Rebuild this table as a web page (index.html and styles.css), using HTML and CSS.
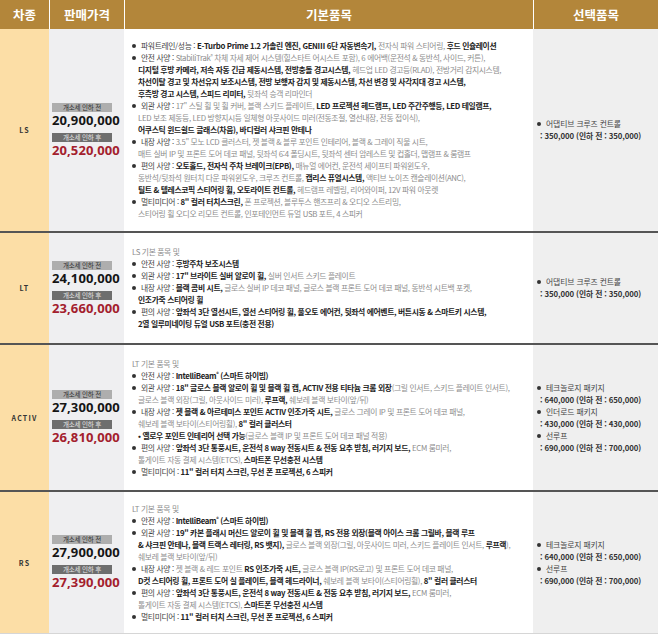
FILE: index.html
```html
<!DOCTYPE html>
<html lang="ko">
<head>
<meta charset="utf-8">
<link rel="stylesheet" href="styles.css">
</head>
<body>
<div class="table">
  <div class="hd">차종</div>
  <div class="hd">판매가격</div>
  <div class="hd">기본품목</div>
  <div class="hd">선택품목</div>

  <!-- LS -->
  <div class="cell trim">LS</div>
  <div class="cell price">
    <div class="pb">
      <div class="tag">개소세 인하 전</div>
      <div class="amt">20,900,000</div>
      <div class="tag dark">개소세 인하 후</div>
      <div class="amt red">20,520,000</div>
    </div>
  </div>
  <div class="cell basic">
    <div class="list">
      <div class="item"><span class="dot"></span><span class="lb">파워트레인/성능 : </span><b>E-Turbo Prime 1.2 가솔린 엔진, GENⅢ 6단 자동변속기,</b> 전자식 파워 스티어링, <b>후드 인슐레이션</b></div>
      <div class="item"><span class="dot"></span><span class="lb">안전 사양 : </span>StabiliTrak<sup class="r">®</sup> 차체 자세 제어 시스템(힐스타트 어시스트 포함), 6 에어백(운전석 &amp; 동반석, 사이드, 커튼),<br><b>디지털 후방 카메라, 저속 자동 긴급 제동시스템, 전방충돌 경고시스템,</b> 헤드업 LED 경고등(RLAD), 전방거리 감지시스템,<br><b>차선이탈 경고 및 차선유지 보조시스템, 전방 보행자 감지 및 제동시스템, 차선 변경 및 사각지대 경고 시스템,</b><br><b>후측방 경고 시스템, 스피드 리미터,</b> 뒷좌석 승객 리마인더</div>
      <div class="item"><span class="dot"></span><span class="lb">외관 사양 : </span>17" 스틸 휠 및 휠 커버, 블랙 스키드 플레이트, <b>LED 프로젝션 헤드램프, LED 주간주행등, LED 테일램프,</b><br>LED 보조 제동등, LED 방향지시등 일체형 아웃사이드 미러(전동조절, 열선내장, 전동 접이식),<br><b>어쿠스틱 윈드쉴드 글래스(차음), 바디컬러 샤크핀 안테나</b></div>
      <div class="item"><span class="dot"></span><span class="lb">내장 사양 : </span>3.5" 모노 LCD 클러스터, 젯 블랙 &amp; 블루 포인트 인테리어, 블랙 &amp; 그레이 직물 시트,<br>매트 실버 IP 및 프론트 도어 데코 패널, 뒷좌석 6:4 폴딩시트, 뒷좌석 센터 암레스트 및 컵홀더, 맵램프 &amp; 룸램프</div>
      <div class="item"><span class="dot"></span><span class="lb">편의 사양 : </span><b>오토홀드, 전자식 주차 브레이크(EPB),</b> 매뉴얼 에어컨, 운전석 세이프티 파워윈도우,<br>동반석/뒷좌석 원터치 다운 파워윈도우, 크루즈 컨트롤, <b>캡리스 퓨얼시스템,</b> 액티브 노이즈 캔슬레이션(ANC),<br><b>틸트 &amp; 텔레스코픽 스티어링 휠, 오토라이트 컨트롤,</b> 헤드램프 레벨링, 리어와이퍼, 12V 파워 아웃렛</div>
      <div class="item"><span class="dot"></span><span class="lb">멀티미디어 : </span><b>8" 컬러 터치스크린,</b> 폰 프로젝션, 블루투스 핸즈프리 &amp; 오디오 스트리밍,<br>스티어링 휠 오디오 리모트 컨트롤, 인포테인먼트 듀얼 USB 포트, 4 스피커</div>
    </div>
  </div>
  <div class="cell opt">
    <div class="list">
      <div class="oitem"><span class="dot"></span>어댑티브 크루즈 컨트롤</div>
      <div class="oprice">: 350,000 (인하 전 : 350,000)</div>
    </div>
  </div>

  <!-- LT -->
  <div class="cell trim sep">LT</div>
  <div class="cell price sep">
    <div class="pb">
      <div class="tag">개소세 인하 전</div>
      <div class="amt">24,100,000</div>
      <div class="tag dark">개소세 인하 후</div>
      <div class="amt red">23,660,000</div>
    </div>
  </div>
  <div class="cell basic sep">
    <div class="list">
      <div class="intro">LS 기본 품목 및</div>
      <div class="item"><span class="dot"></span><span class="lb">안전 사양 : </span><b>후방주차 보조시스템</b></div>
      <div class="item"><span class="dot"></span><span class="lb">외관 사양 : </span><b>17" 브라이트 실버 알로이 휠,</b> 실버 인서트 스키드 플레이트</div>
      <div class="item"><span class="dot"></span><span class="lb">내장 사양 : </span><b>블랙 콤비 시트,</b> 글로스 실버 IP 데코 패널, 글로스 블랙 프론트 도어 데코 패널, 동반석 시트백 포켓,<br><b>인조가죽 스티어링 휠</b></div>
      <div class="item"><span class="dot"></span><span class="lb">편의 사양 : </span><b>앞좌석 3단 열선시트, 열선 스티어링 휠, 풀오토 에어컨, 뒷좌석 에어벤트, 버튼시동 &amp; 스마트키 시스템,</b><br><b>2열 일루미네이팅 듀얼 USB 포트(충전 전용)</b></div>
    </div>
  </div>
  <div class="cell opt sep">
    <div class="list">
      <div class="oitem"><span class="dot"></span>어댑티브 크루즈 컨트롤</div>
      <div class="oprice">: 350,000 (인하 전 : 350,000)</div>
    </div>
  </div>

  <!-- ACTIV -->
  <div class="cell trim sep">ACTIV</div>
  <div class="cell price sep">
    <div class="pb">
      <div class="tag">개소세 인하 전</div>
      <div class="amt">27,300,000</div>
      <div class="tag dark">개소세 인하 후</div>
      <div class="amt red">26,810,000</div>
    </div>
  </div>
  <div class="cell basic sep">
    <div class="list">
      <div class="intro">LT 기본 품목 및</div>
      <div class="item"><span class="dot"></span><span class="lb">안전 사양 : </span><b>IntelliBeam<sup class="r">®</sup> (스마트 하이빔)</b></div>
      <div class="item"><span class="dot"></span><span class="lb">외관 사양 : </span><b>18" 글로스 블랙 알로이 휠 및 블랙 휠 캡, ACTIV 전용 티타늄 크롬 외장</b>(그릴 인서트, 스키드 플레이트 인서트),<br>글로스 블랙 외장(그릴, 아웃사이드 미러), <b>루프랙,</b> 쉐보레 블랙 보타이(앞/뒤)</div>
      <div class="item"><span class="dot"></span><span class="lb">내장 사양 : </span><b>젯 블랙 &amp; 아르테미스 포인트 ACTIV 인조가죽 시트,</b> 글로스 그레이 IP 및 프론트 도어 데코 패널,<br>쉐보레 블랙 보타이(스티어링휠), <b>8" 컬러 클러스터</b><br><b>• 옐로우 포인트 인테리어 선택 가능</b>(글로스 블랙 IP 및 프론트 도어 데코 패널 적용)</div>
      <div class="item"><span class="dot"></span><span class="lb">편의 사양 : </span><b>앞좌석 3단 통풍시트, 운전석 8 way 전동시트 &amp; 전동 요추 받침, 러기지 보드,</b> ECM 룸미러,<br>톨게이트 자동 결제 시스템(ETCS), <b>스마트폰 무선충전 시스템</b></div>
      <div class="item"><span class="dot"></span><span class="lb">멀티미디어 : </span><b>11" 컬러 터치 스크린, 무선 폰 프로젝션, 6 스피커</b></div>
    </div>
  </div>
  <div class="cell opt sep">
    <div class="list">
      <div class="oitem"><span class="dot"></span>테크놀로지 패키지</div>
      <div class="oprice">: 640,000 (인하 전 : 650,000)</div>
      <div class="oitem"><span class="dot"></span>인더로드 패키지</div>
      <div class="oprice">: 430,000 (인하 전 : 430,000)</div>
      <div class="oitem"><span class="dot"></span>선루프</div>
      <div class="oprice">: 690,000 (인하 전 : 700,000)</div>
    </div>
  </div>

  <!-- RS -->
  <div class="cell trim sep last">RS</div>
  <div class="cell price sep last">
    <div class="pb">
      <div class="tag">개소세 인하 전</div>
      <div class="amt">27,900,000</div>
      <div class="tag dark">개소세 인하 후</div>
      <div class="amt red">27,390,000</div>
    </div>
  </div>
  <div class="cell basic sep last">
    <div class="list">
      <div class="intro">LT 기본 품목 및</div>
      <div class="item"><span class="dot"></span><span class="lb">안전 사양 : </span><b>IntelliBeam<sup class="r">®</sup> (스마트 하이빔)</b></div>
      <div class="item"><span class="dot"></span><span class="lb">외관 사양 : </span><b>19" 카본 플래시 머신드 알로이 휠 및 블랙 휠 캡, RS 전용 외장(블랙 아이스 크롬 그릴바, 블랙 루프</b><br><b>&amp; 샤크핀 안테나, 블랙 트랙스 레터링, RS 뱃지),</b> 글로스 블랙 외장(그릴, 아웃사이드 미러, 스키드 플레이트 인서트, <b>루프랙</b>),<br>쉐보레 블랙 보타이(앞/뒤)</div>
      <div class="item"><span class="dot"></span><span class="lb">내장 사양 : </span>젯 블랙 &amp; 레드 포인트 <b>RS 인조가죽 시트,</b> 글로스 블랙 IP(RS로고) 및 프론트 도어 데코 패널,<br><b>D컷 스티어링 휠, 프론트 도어 실 플레이트, 블랙 헤드라이너,</b> 쉐보레 블랙 보타이(스티어링휠), <b>8" 컬러 클러스터</b></div>
      <div class="item"><span class="dot"></span><span class="lb">편의 사양 : </span><b>앞좌석 3단 통풍시트, 운전석 8 way 전동시트 &amp; 전동 요추 받침, 러기지 보드,</b> ECM 룸미러,<br>톨게이트 자동 결제 시스템(ETCS), <b>스마트폰 무선충전 시스템</b></div>
      <div class="item"><span class="dot"></span><span class="lb">멀티미디어 : </span><b>11" 컬러 터치 스크린, 무선 폰 프로젝션, 6 스피커</b></div>
    </div>
  </div>
  <div class="cell opt sep last">
    <div class="list">
      <div class="oitem"><span class="dot"></span>테크놀로지 패키지</div>
      <div class="oprice">: 640,000 (인하 전 : 650,000)</div>
      <div class="oitem"><span class="dot"></span>선루프</div>
      <div class="oprice">: 690,000 (인하 전 : 700,000)</div>
    </div>
  </div>
</div>
</body>
</html>
```

FILE: styles.css
```css
* { box-sizing: border-box; }
html, body { margin: 0; padding: 0; background: #fff; }
body {
  font-family: "Noto Sans CJK KR", "Noto Sans", sans-serif;
  width: 658px;
  height: 635px;
  overflow: hidden;
}
.table {
  display: grid;
  grid-template-columns: 49px 75px 409px 125px;
  grid-template-rows: 29px 202px 112px 147px 143px;
  border-bottom: 1px solid #d6d6d6;
}
.hd {
  background: #b3863a;
  color: #fff;
  font-weight: 700;
  font-size: 12.5px;
  display: flex;
  align-items: center;
  justify-content: center;
  border-left: 1px solid #fff;
}
.hd:first-child { border-left: 0; }
.cell {
  display: flex;
  align-items: center;
}
.sep { border-top: 2px solid #555; }
.trim {
  background: #fcdea6;
  justify-content: center;
  font-size: 7px;
  font-weight: 700;
  letter-spacing: 1.2px;
  color: #333;
}
.price {
  background: #efeff1;
  padding-left: 3px;
}
.pb { display: flex; flex-direction: column; align-items: flex-start; }
.tag {
  width: 60px;
  height: 9px;
  line-height: 9px;
  font-size: 6.5px;
  text-align: center;
  background: #aeaeae;
  color: #2a2a2a;
  letter-spacing: -0.2px;
}
.tag.dark {
  background: #6e6e6e;
  color: #e6e6e6;
  margin-top: 5px;
}
.amt {
  font-family: "Open Sans", "Noto Sans", sans-serif;
  font-weight: 700;
  font-size: 13px;
  line-height: 16px;
  color: #151515;
  letter-spacing: 0.1px;
}
.amt.red { color: #a3202d; }
.basic {
  background: #fff;
  padding-left: 8px;
}
.list {
  font-size: 7.8px;
  line-height: 12px;
  letter-spacing: -0.35px;
  color: #8d8d8d;
  white-space: nowrap;
}
.item {
  padding-left: 6px;
  text-indent: -6px;
}
.intro { color: #8d8d8d; }
.lb { color: #444; }
.list b { color: #222; font-weight: 700; }
.dot {
  display: inline-block;
  width: 4px;
  height: 4px;
  border-radius: 50%;
  background: #333;
  margin-right: 5px;
  vertical-align: 1px;
  text-indent: 0;
}
sup.r {
  font-size: 5px;
  line-height: 0;
  vertical-align: 3px;
}
.opt {
  background: #efefef;
  padding-left: 4px;
}
.opt .list { letter-spacing: -0.1px; }
.oitem { color: #444; }
.oprice {
  padding-left: 3px;
  font-weight: 700;
  color: #333;
}
```
